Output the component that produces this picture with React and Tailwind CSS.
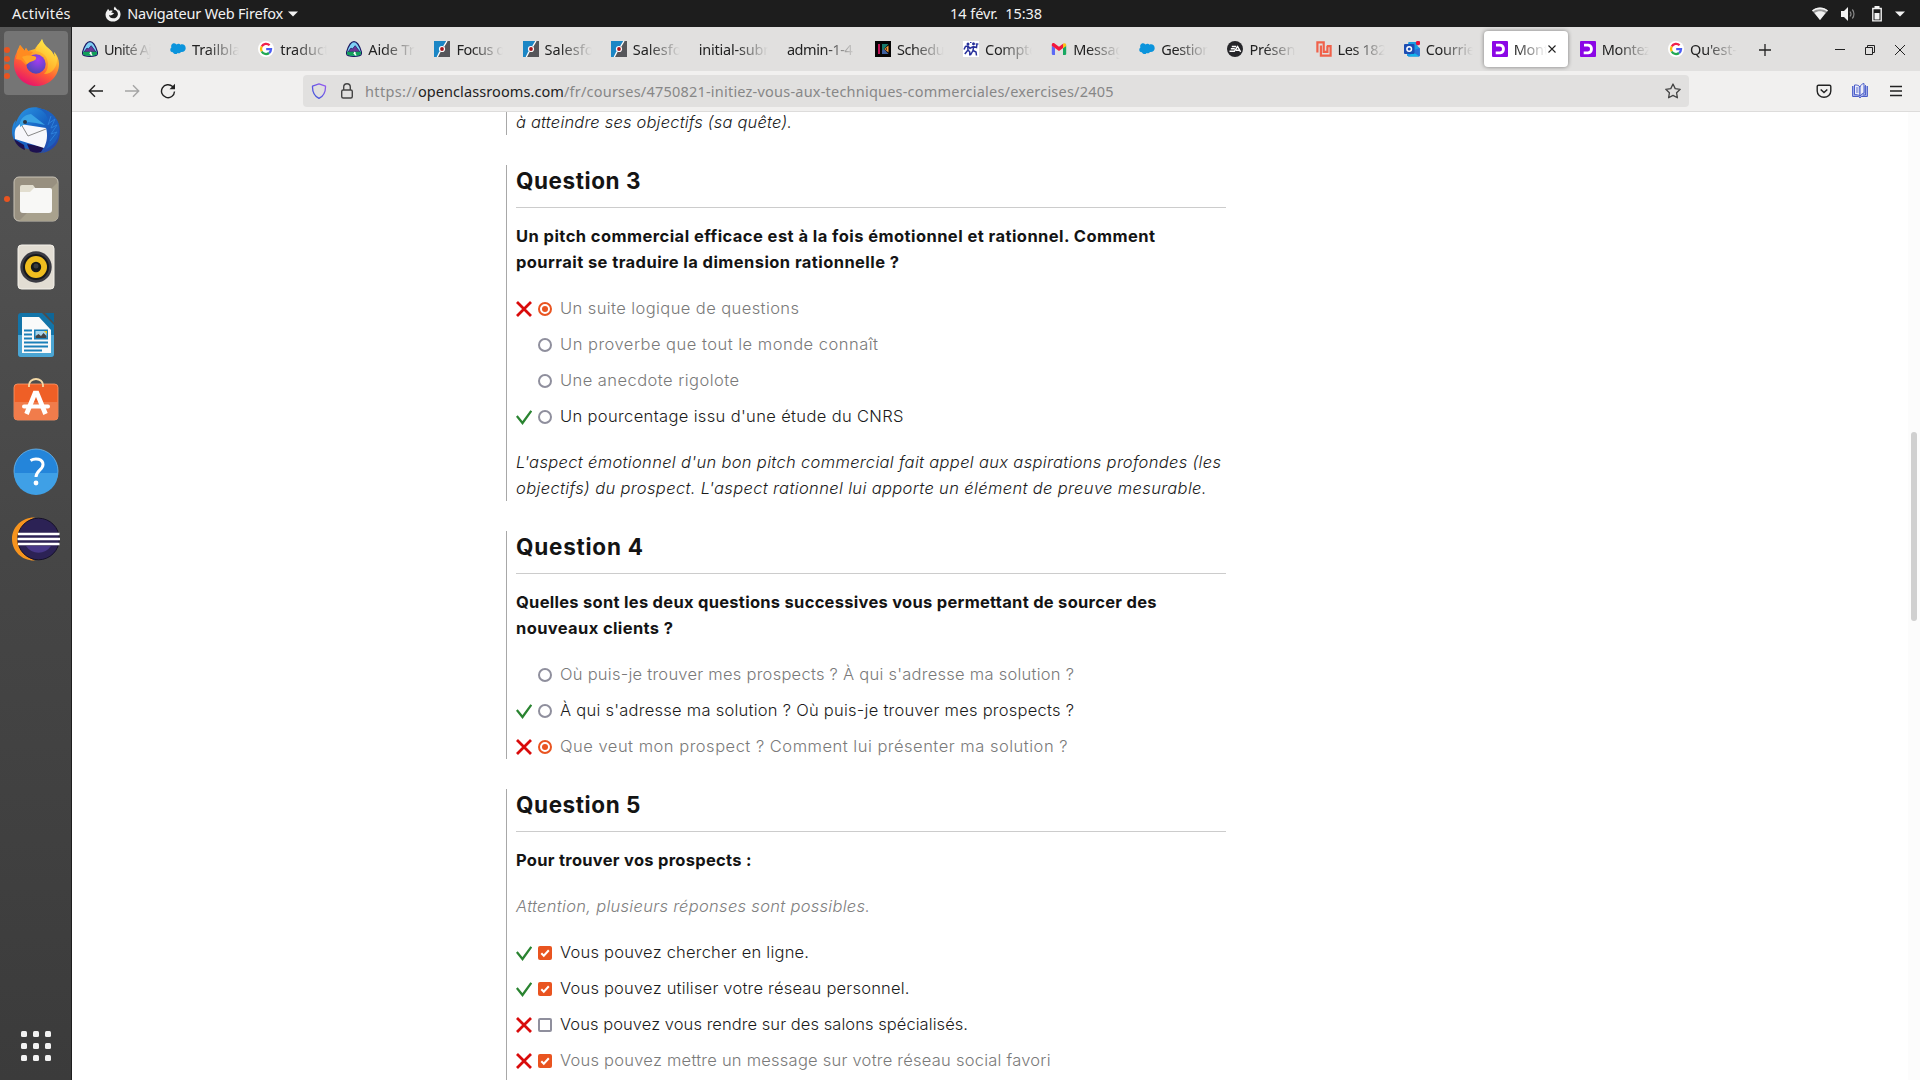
import { useLayoutEffect, useRef } from "react";

/* Text run whose letter spacing is adjusted so that it is exactly `w` pixels wide. */
function Fit({ w, className = "", children }) {
  const ref = useRef(null);
  useLayoutEffect(() => {
    const el = ref.current;
    const apply = () => {
      el.style.letterSpacing = "0px";
      const n = el.textContent.length;
      const natural = el.getBoundingClientRect().width;
      el.style.letterSpacing = `${(w - natural) / (n - 1)}px`;
    };
    apply();
    document.fonts?.ready.then(apply);
  }, [w, children]);
  return (
    <span ref={ref} className={`inline-block whitespace-pre ${className}`}>
      {children}
    </span>
  );
}

/* ---------- favicons ---------- */
const Svg = ({ children, s = 16, className = "", ...p }) => (
  <svg width={s} height={s} viewBox={`0 0 ${s} ${s}`} className={`shrink-0 ${className}`} {...p}>
    {children}
  </svg>
);
const Trailhead = () => (
  <Svg>
    <path d="M8 .6C11 .6 13.6 5 15.3 10.6c.5 2-.3 3.600-1.800 4.100-3.500.9-7.500.9-11 0C1 14.200.2 12.600.7 10.600 2.400 5 5 .6 8 .6Z" fill="#7fd0f5" stroke="#1d1a63" strokeWidth="1.200" />
    <path d="M2 11 5 7l1.300 1L9.200 4.700 14 11Z" fill="#6b3796" stroke="#1d1a63" strokeWidth=".7" />
    <path d="M1.100 10.800h13.800c.5 1.700-.2 3-1.500 3.400-3.500.8-7.300.8-10.800 0-1.300-.4-2-1.700-1.500-3.400Z" fill="#12a05a" />
    <path d="M7.500 10.800c2 .8-1.500 1.500.5 2.200l1 1.500h1.500c.3-1.500-1.500-1.500-.8-2.300.5-.6-.7-1.100-1.200-1.400Z" fill="#fff" />
  </Svg>
);
const Cloud = () => (
  <Svg>
    <path d="M6.600 3.500C7.200 2.800 8 2.600 8.700 2.700c.8.100 1.300.5 1.700 1 2.600-1.200 5.300.5 5.300 3.500 0 2.700-2.400 4.200-4.700 3.700-.8 1.300-2.300 1.500-3.400 1-1 1.800-4 1.600-4.700-.6C1.200 11.400 0 9.900.3 8.200c.1-.8.5-1.400 1.100-1.800C.5 4 2.400 2.200 4.300 2.300c1 .1 1.700.5 2.300 1.200Z" fill="#0b94dc" />
  </Svg>
);
const Google = () => (
  <Svg>
    <circle cx="8" cy="8" r="8" fill="#fff" />
    <g fill="none" strokeWidth="2.300">
      <path d="M11.600 4.300A5 5 0 0 0 3.700 5.500" stroke="#f0214b" />
      <path d="M3.700 5.500a5 5 0 0 0 0 5" stroke="#fbbc05" />
      <path d="M3.700 10.500a5 5 0 0 0 7.400 1.500" stroke="#21a852" />
      <path d="M11.100 12A5 5 0 0 0 13 8.200H8.200" stroke="#4a5cf2" />
    </g>
  </Svg>
);
const Focus = () => (
  <Svg>
    <path d="M0 0h16v16H0z" fill="#55565a" />
    <path d="M0 0h12.500L9 6 3.200 16H0z" fill="#1b86c5" />
    <path d="M13 0 9.800 5.400M6 10.600 3.300 16" stroke="#fff" strokeWidth="1.300" />
    <circle cx="8" cy="8" r="3.100" fill="#fff" />
    <circle cx="8" cy="8" r="1.900" fill="#a8161c" />
  </Svg>
);
const Kx = () => (
  <Svg>
    <path d="M0 0h16v16H0z" fill="#050505" />
    <path d="M3 3h2v10H3z" fill="#c01457" />
    <path d="M7 3h6.500L9 8v5H7z" fill="#16796a" />
    <path d="M7 9.500 9 8l4.500 5H7z" fill="#3d5f9d" />
    <path d="M13.500 4.500v7L9.300 8z" fill="#f09a35" />
    <path d="M12 6.700v2.600L10.500 8z" fill="#3a1f2c" />
  </Svg>
);
const Compt = () => (
  <Svg>
    <path d="M0 0h16v16H0z" fill="#fff" />
    <g fill="none" stroke="#27309b" strokeWidth="1.500">
      <path d="M4.700 5 5 9l-3.200 4M5 9l1.800 2v3.500M1 8.500l1.500-3L5 5l2.500 3M10.700 5 10 9.500 7.500 14M10 9.500l3 1.500.5 3.500M7.500 7l3-1.500 3 1L14 2.500" />
    </g>
    <circle cx="5" cy="3" r="1.500" fill="#27309b" />
    <circle cx="10.500" cy="2.700" r="1.500" fill="#27309b" />
    <path d="M12.500 3h3M7 1.500h1.500" stroke="#27309b" />
  </Svg>
);
const Gmail = () => (
  <Svg>
    <path d="M.8 4.500 4 7v7H2a1.200 1.200 0 0 1-1.200-1.200z" fill="#5b6af5" />
    <path d="M15.200 4.500 12 7v7h2a1.200 1.200 0 0 0 1.200-1.200z" fill="#17a861" />
    <path d="M.8 4.800V3.700C.8 2 2.500 1.600 3.600 2.400L8 5.800l4.400-3.400v4.300L8 10 .8 4.800Z" fill="#f3173c" />
    <path d="M12 2.700c1.300-1 3.200-.5 3.200 1.100v1.200L12 7.300z" fill="#fcc01a" />
  </Svg>
);
const Ea = () => (
  <Svg>
    <circle cx="8" cy="8" r="8" fill="#26262a" />
    <path d="M4.800 5.500h4.400M3.800 7.800h4M2.500 10.300h4.800l3.300-4.800 3 5.300M9 9.300h3.500" stroke="#fff" strokeWidth="1.400" fill="none" />
  </Svg>
);
const Les = () => (
  <Svg>
    <path d="M1.400 11.500V1.400h6.300v9.500h3.700V5M4.900 4.500v10.100h9.700V5.200h-3.800" stroke="#f0614a" strokeWidth="2.200" fill="none" />
  </Svg>
);
const Outlook = () => (
  <Svg>
    <path d="M4.500 1h9v4l2.300 2v8H3V8z" fill="#1b9de2" />
    <path d="M9 9.500 15.800 7v7.500a1 1 0 0 1-1 1H4z" fill="#2a6fd6" />
    <path d="M4 15.500 9 11l6.500 4.500z" fill="#14b4ea" />
    <rect x="0" y="3" width="10.500" height="10" rx="1" fill="#1b4db3" />
    <circle cx="5.200" cy="8" r="2.300" fill="none" stroke="#fff" strokeWidth="1.500" />
    <circle cx="14" cy="2" r="2.200" fill="#e5123c" />
  </Svg>
);
const Oc = () => (
  <Svg>
    <rect width="16" height="16" rx="1" fill="#8b07e6" />
    <path d="M4 4.200h4.200a3.900 3.900 0 0 1 0 7.700H3.700" fill="none" stroke="#fff" strokeWidth="2.800" />
  </Svg>
);

const TABS = [
  [Trailhead, "Unité Aj", 48],
  [Cloud, "Trailblaz", 55],
  [Google, "traduct", 49],
  [Trailhead, "Aide Tra", 54],
  [Focus, "Focus on", 57],
  [Focus, "Salesfor", 55],
  [Focus, "Salesfor", 55],
  [null, "initial-subm", 78],
  [null, "admin-1-4", 66],
  [Kx, "Schedul", 51],
  [Compt, "Compte", 52],
  [Gmail, "Messag", 51],
  [Cloud, "Gestion", 50],
  [Ea, "Présent", 51],
  [Les, "Les 182", 49],
  [Outlook, "Courrier", 55],
  [Oc, "Monte", 43, true],
  [Oc, "Montez", 49],
  [Google, "Qu'est-c", 54],
];

function Tab({ tab: [Icon, text, w, active] }) {
  return (
    <div className="w-[88.12px] shrink-0 px-[2px] py-1">
      <div className={`flex h-9 items-center rounded pl-2 ${active ? "bg-white shadow-[0_0_4px_rgba(0,0,0,0.45)]" : ""}`}>
        {Icon && <span className="mr-[6px]"><Icon /></span>}
        <div
          className={`overflow-hidden text-[14.5px] leading-5 ${active ? "w-[33px]" : Icon ? "w-[47px]" : "w-[69px]"} [mask-image:linear-gradient(to_left,transparent,black_32px)]`}
        >
          <Fit w={w}>{text}</Fit>
        </div>
        {active && (
          <Svg s={8} className="ml-[1px]">
            <path d="m.5.5 7 7m0-7-7 7" stroke="#222" strokeWidth="1.100" />
          </Svg>
        )}
      </div>
    </div>
  );
}

/* ---------- dock ---------- */
const DockSvg = ({ children }) => (
  <svg width="52" height="52" viewBox="0 0 52 52">{children}</svg>
);
const Firefox = () => (
  <DockSvg>
    <defs>
      <linearGradient id="ffa" x1=".8" y1="0" x2=".3" y2="1">
        <stop offset="0" stopColor="#fff04a" /><stop offset=".35" stopColor="#ffb02c" /><stop offset=".65" stopColor="#ff5a36" /><stop offset="1" stopColor="#e5106f" />
      </linearGradient>
      <linearGradient id="ffb" x1=".7" y1="0" x2=".3" y2="1">
        <stop offset="0" stopColor="#fff44f" /><stop offset="1" stopColor="#ff9a1f" />
      </linearGradient>
      <radialGradient id="ffc" cx=".6" cy=".3" r=".7">
        <stop offset="0" stopColor="#a43cf0" /><stop offset="1" stopColor="#4f46b8" />
      </radialGradient>
    </defs>
    <path d="M32 2c-1 3-5 6-7 10l-7 2-2-3c-1 1-1 2-1 3L10 8C9 11 7 13 6.500 16 4.500 19 4 24 4 27c0 12 10 22 22.500 22S49 39 49 27c0-5-2-9-5-12l1 5-3-5C39 11 33 9 32 2Z" fill="url(#ffa)" />
    <path d="M32 2c-1 3-6 7-6 12 7 1 12 6 12 13 0 5-2 8-4 10 9 0 13-8 13-14 0-3-1-6-3-8l1 5-3-5C38 10 34 9 32 2Z" fill="url(#ffb)" />
    <circle cx="26" cy="27" r="9.700" fill="url(#ffc)" />
    <path d="m10 8 5 6 1-3 2 3 5 1-3 3 6 2c0 3-4 4-7 5l-3 3-5-5-5-1c1-5 3-10 4-14Z" fill="#ff8b20" />
    <path d="M12 20c4-2 8-2 14 0 1 3-3 4-6 5l-3 2Z" fill="#ffa528" />
  </DockSvg>
);
const Thunderbird = () => (
  <DockSvg>
    <defs>
      <linearGradient id="tba" x1="0" y1="0" x2="1" y2="1">
        <stop offset="0" stopColor="#2d9be6" /><stop offset=".5" stopColor="#1763c4" /><stop offset="1" stopColor="#2a3fa0" />
      </linearGradient>
    </defs>
    <path d="M19 3c4-1 9-1 13 1 10 2 18 11 18 22s-6 20-18 22l3-3-4 3-3-1 3-2C16 46 3 40 2 28c0-6 1-10 4-13l-1 5c3-8 6-14 14-17Z" fill="url(#tba)" />
    <path d="M4 34c2 6 6 9 11 11l-1-5Zm13 5 3 7c4 2 7 2 11 1l3-5Z" fill="#1d1150" />
    <path d="m10 19 26 4c2 7 1 14-2 20L5 34c0-3-1-7 1-11Z" fill="#f7f7fb" />
    <path d="m11 19 7 12 18-7" fill="none" stroke="#888" strokeWidth="1" />
    <path d="M10 22c-1-8 4-12 11-13l14 11-9-2-8-1Z" fill="#3aa3e5" />
    <path d="M22 3c10-1 15 6 17 14s2 18-3 27c11-5 14-14 13-23C47 11 38 2 22 3Z" fill="#1c5fbe" />
    <circle cx="15" cy="17" r="2" fill="#2b3540" />
    <path d="m38 19 7-5-4 9 6-3-6 9 6-2-7 9m-2-16 3-9" stroke="#2c7fd9" strokeWidth="1" fill="none" />
  </DockSvg>
);
const Files = () => (
  <DockSvg>
    <rect x="4" y="4" width="44" height="44" rx="5" fill="#989080" stroke="#c9c3b6" strokeWidth="1" />
    <path d="M48 9v34a5 5 0 0 1-5 5H9Z" fill="#a8a18d" />
    <path d="M10 14a2 2 0 0 1 2-2h11l3 4v8H10z" fill="#e2decf" />
    <path d="M10 19h10l4-4h16a2 2 0 0 1 2 2v20a3 3 0 0 1-3 3H13a3 3 0 0 1-3-3z" fill="#f8f8f6" />
  </DockSvg>
);
const Rhythmbox = () => (
  <DockSvg>
    <rect x="8" y="4" width="36" height="44" rx="3.500" fill="#e2ddd3" stroke="#f4f1ea" />
    <circle cx="26" cy="26" r="15.700" fill="#3a3a42" />
    <circle cx="26" cy="26" r="13" fill="#17181c" />
    <circle cx="26" cy="26" r="11" fill="#f0bd1f" />
    <circle cx="26" cy="26" r="5.200" fill="#17181a" />
    <circle cx="26" cy="25" r="2.500" fill="#3a3b3e" />
  </DockSvg>
);
const Writer = () => (
  <DockSvg>
    <path d="M11 4h21l12 12v29a3 3 0 0 1-3 3H11a3 3 0 0 1-3-3V7a3 3 0 0 1 3-3Z" fill="#1374a8" />
    <path d="M8 26h36v19a3 3 0 0 1-3 3H11a3 3 0 0 1-3-3Z" fill="#4ba5d3" />
    <path d="M12 8h17l12 13v23H12z" fill="#fafafa" />
    <path d="M35 4h9v10z" fill="#0f6697" />
    <path d="M14 21.500h8m-8 4h8m-8 4h8m-8 4h24m-24 4h24m-24 4h18" stroke="#1a7fb8" strokeWidth="1.800" />
    <path d="M24 20.500h14v10H24z" fill="#1a7fb8" />
    <path d="M25.500 22h11v7h-11z" fill="#a8d4ea" />
    <path d="m25.500 29v-2l3-2 2.500 2 2.500-3 3 3v2z" fill="#444" />
    <path d="M34 22h3v3z" fill="#f2c71c" />
  </DockSvg>
);
const Software = () => (
  <DockSvg>
    <rect x="4" y="7" width="44" height="36" rx="3.500" fill="#ef5f26" stroke="#ff9a6b" strokeWidth=".8" />
    <path d="M4 25h44v14a4 4 0 0 1-4 4H8a4 4 0 0 1-4-4z" fill="#f17c4b" />
    <path d="M19 10V8a7 6 0 0 1 14 0v2" fill="none" stroke="#f4d9a6" strokeWidth="1.800" />
    <path d="m16.500 37 8.500-21h2l8.500 21" fill="none" stroke="#fff" strokeWidth="4.700" />
    <path d="M14 29.500h24" stroke="#fff" strokeWidth="4" strokeLinecap="round" />
  </DockSvg>
);
const Help = () => (
  <DockSvg>
    <circle cx="26" cy="26" r="22" fill="#2485da" stroke="#6cb8ee" strokeWidth=".8" />
    <path d="M4 28h44a22 22 0 0 1-44 0Z" fill="#3fa0e6" />
    <path d="M20.500 15.500c5-3 12.500-1.500 12.500 4 0 5.500-7 6-7 12.500" fill="none" stroke="#fff" strokeWidth="3" />
    <circle cx="26" cy="38" r="2.400" fill="#fff" />
  </DockSvg>
);
const Eclipse = () => (
  <DockSvg>
    <path d="M25 4.500C12 4 2 14 2 26s10 22 23 21.500C16 44 9 37 9 26S16 8 25 4.500Z" fill="#f7941e" />
    <circle cx="28.500" cy="26" r="20.800" fill="#2c2255" stroke="#161129" />
    <path d="M16 33h25a15 15 0 0 1-25 0Z" fill="#473788" />
    <path d="M8 21h41.500M7.500 26H50M8 31h41.500" stroke="#fff" strokeWidth="2.300" />
  </DockSvg>
);
const DOCK = [[Firefox, 4], [Thunderbird, 0], [Files, 1], [Rhythmbox, 0], [Writer, 0], [Software, 0], [Help, 0], [Eclipse, 0]];

function Dock() {
  return (
    <aside className="flex w-[72px] shrink-0 flex-col justify-between border-r border-[#1e1e1e] bg-gradient-to-b from-[#575757] via-[#464646] to-[#3b3b3b] pt-[2px]">
      <div className="flex flex-col">
        {DOCK.map(([Icon, dots], i) => (
          <div key={i} className="h-[68px] py-[2px] pl-1">
            <div className={`relative flex h-16 w-16 items-center justify-center rounded ${i === 0 ? "bg-[#757575]" : ""}`}>
              <div className="absolute left-0 flex h-full flex-col items-center justify-center gap-[2.700px]">
                {Array.from({ length: dots }, (_, k) => (
                  <i key={k} className="h-[6px] w-[6px] rounded-full bg-[#e95420]" />
                ))}
              </div>
              <Icon />
            </div>
          </div>
        ))}
      </div>
      <div className="mb-[19px] ml-[21px] grid w-[30px] grid-cols-3 gap-[6px]">
        {Array.from({ length: 9 }, (_, k) => (
          <i key={k} className="h-[6px] w-[6px] rounded-[1.500px] bg-[#f2f2f2]" />
        ))}
      </div>
    </aside>
  );
}

/* ---------- system bar ---------- */
function TopBar() {
  return (
    <header className="grid h-[27px] grid-cols-3 items-center bg-[#1d1d1d] text-[14.500px] leading-[27px] text-[#f2f2f2]">
      <div className="flex items-center pl-3">
        <Fit w={58.5}>Activités</Fit>
        <Svg className="ml-[34.5px]">
          <path d="M10 .6c-1 .8-1.500 2-.8 3.200A4.200 4.200 0 0 1 8 12.300C5.500 12.300 4 10.500 4 8.700c.5.6 1.200.8 2 .6 1.500-.2 2-1.300 3-1.600-.5-1-1.600-1-2.600-.8.1-1 .8-1.600 1.500-2C6.800 4.500 5.500 4.300 4.600 5L3 2.700C2.700 3.500 2.300 4.200 1.700 5 0 7.500.2 10.500 1.800 12.700 5 16.700 11.500 16.500 14.300 12.500c2.300-3.600 1.200-7.300-1-9.300l.2 1.800C12.500 3 10.500 2.500 10 .6Z" fill="#f2f2f2" />
        </Svg>
        <Fit w={156} className="ml-[6px]">Navigateur Web Firefox</Fit>
        <Svg s={10} className="ml-[5px]"><path d="M0 2.500h10L5 7.500z" fill="#f2f2f2" /></Svg>
      </div>
      <div className="-mt-px flex pl-[310px]">
        <Fit w={92}>14 févr.  15:38</Fit>
      </div>
      <div className="flex items-center justify-end pr-[15px]">
        <Svg><path d="M0 4.500c4.500-4 11.500-4 16 0L8 14z" fill="#999" /><path d="M0 4.500c4.500-4 11.500-4 16 0l-1 1c-4-3-10-3-14 0zM2.500 7c3-2.500 8-2.500 11 0L8 14z" fill="#f2f2f2" /></Svg>
        <Svg className="ml-[12px]"><path d="M1 5h3l4-4v14l-4-4H1z" fill="#f2f2f2" /><path d="M10 5.500c1.200 1.500 1.200 3.500 0 5M12.300 3.500c2.200 2.500 2.200 6.500 0 9" stroke="#888" fill="none" strokeWidth="1.200" /></Svg>
        <Svg className="ml-[13px]"><path d="M3.800 2.500h8.400v12.400H3.800z" fill="none" stroke="#f2f2f2" strokeWidth="1.400" /><path d="M5.500 0h5v2h-5zM5.500 7h5v6.500h-5z" fill="#f2f2f2" /></Svg>
        <Svg s={10} className="ml-[10px]"><path d="M0 2.500h10L5 7.500z" fill="#f2f2f2" /></Svg>
      </div>
    </header>
  );
}

/* ---------- browser chrome ---------- */
function TabStrip() {
  return (
    <div className="flex h-11 items-start bg-[#e1e0df] text-[#222]">
      {TABS.map((t, i) => <Tab key={i} tab={t} />)}
      <div className="flex h-[45px] flex-1 items-center pl-[13px]">
        <Svg s={12}><path d="M6 0v12M0 6h12" stroke="#222" strokeWidth="1.300" /></Svg>
        <Svg s={10} className="ml-[64px]"><path d="M0 4.500h10" stroke="#222" strokeWidth="1" /></Svg>
        <Svg s={10} className="ml-[20px]"><path d="M.5 2.500h7v7h-7zM2.500 2.500v-2h7v7h-2" fill="none" stroke="#222" /></Svg>
        <Svg s={10} className="ml-[20px]"><path d="m0 0 10 10M10 0 0 10" stroke="#222" strokeWidth="1" /></Svg>
      </div>
    </div>
  );
}

function NavBar() {
  return (
    <div className="flex h-[41px] items-start border-b border-[#dddcdb] bg-[#f1f0ef] pt-1 text-[#333]">
      <div className="flex h-8 w-[231px] items-center pl-4">
        <Svg><path d="M15 8H1.500M7 2.300 1.300 8 7 13.700" fill="none" stroke="#222" strokeWidth="1.400" /></Svg>
        <Svg className="ml-5"><path d="M1 8h13.500M9 2.300 14.700 8 9 13.700" fill="none" stroke="#a5a5a5" strokeWidth="1.400" /></Svg>
        <Svg className="ml-5"><path d="M14.500 8.500A6.500 6.500 0 1 1 12.600 3.600L14 5" fill="none" stroke="#222" strokeWidth="1.400" /><path d="M15 .8V6.300H9.500z" fill="#222" /></Svg>
      </div>
      <div className="flex h-8 w-[1386px] items-center rounded bg-[#e1e0df] pl-2 pr-2">
        <Svg>
          <defs><linearGradient id="sh" x1="1" y1="0" x2="0" y2="1"><stop offset="0" stopColor="#9a5cf0" /><stop offset="1" stopColor="#3553d8" /></linearGradient></defs>
          <path d="M8 .8 14.500 3.200C14.700 9 12.500 13 8 15.400 3.500 13 1.300 9 1.500 3.200z" fill="none" stroke="url(#sh)" strokeWidth="1.300" strokeLinejoin="round" />
        </Svg>
        <Svg className="ml-3"><rect x="2.700" y="7" width="10.600" height="8" rx="1.500" fill="none" stroke="#444" strokeWidth="1.400" /><path d="M4.700 7V4a3.300 3.300 0 0 1 6.600 0v3" fill="none" stroke="#444" strokeWidth="1.400" /></Svg>
        <div className="ml-[10px] flex text-[14.500px] leading-5 text-[#878787]">
          <Fit w={52.5}>https://</Fit>
          <Fit w={146} className="text-[#222]">openclassrooms.com</Fit>
          <Fit w={549.5}>/fr/courses/4750821-initiez-vous-aux-techniques-commerciales/exercises/2405</Fit>
        </div>
        <Svg className="ml-auto"><path d="m8 1 2.200 4.600 5 .7-3.600 3.500.8 5L8 12.400l-4.400 2.400.8-5L.8 6.300l5-.7z" fill="none" stroke="#444" strokeWidth="1.300" strokeLinejoin="round" /></Svg>
      </div>
      <div className="flex h-8 flex-1 items-center justify-end pr-4">
        <Svg><path d="M2.500 2.200h11a1.300 1.300 0 0 1 1.300 1.300V8a6.800 6.300 0 0 1-13.600 0V3.500a1.300 1.300 0 0 1 1.300-1.300Z" fill="none" stroke="#222" strokeWidth="1.400" /><path d="m4.700 6.500 3.300 3 3.300-3" fill="none" stroke="#222" strokeWidth="1.500" /></Svg>
        <Svg className="ml-5">
          <path d="M.6 3v10.500h6.200L8 15l1.200-1.500h6.200V3" fill="#a9b4ea" stroke="#4a5cc8" />
          <path d="M2.500 2C4.800 1.700 7 2.500 8 4v9c-1.500-1.200-3.500-1.500-5.500-1.300z" fill="#eceefa" stroke="#4a5cc8" />
          <path d="M8 4c.7-2 2-3.200 4-3.500v9.500C10.500 10.500 9 11.500 8 13z" fill="#eceefa" stroke="#4a5cc8" />
          <path d="M13.500 2v10H11M4 5h2.500M4 7h2.500M4 9h2.500" fill="none" stroke="#4a5cc8" strokeWidth=".9" />
        </Svg>
        <Svg className="ml-5" s={16}><path d="M2 3.500h12M2 8h12M2 12.500h12" stroke="#222" strokeWidth="1.400" /></Svg>
      </div>
    </div>
  );
}

/* ---------- quiz ---------- */
const QUESTIONS = [
  {
    n: "Question 3",
    lines: [["Un pitch commercial efficace est à la fois émotionnel et rationnel. Comment", 639], ["pourrait se traduire la dimension rationnelle ?", 383]],
    options: [
      ["x", true, "Un suite logique de questions", 239, false],
      ["", false, "Un proverbe que tout le monde connaît", 318, false],
      ["", false, "Une anecdote rigolote", 179, false],
      ["v", false, "Un pourcentage issu d'une étude du CNRS", 343.5, true],
    ],
    note: [["L'aspect émotionnel d'un bon pitch commercial fait appel aux aspirations profondes (les", 705], ["objectifs) du prospect. L'aspect rationnel lui apporte un élément de preuve mesurable.", 690.5]],
  },
  {
    n: "Question 4",
    w: 127,
    lines: [["Quelles sont les deux questions successives vous permettant de sourcer des", 640.5], ["nouveaux clients ?", 157]],
    options: [
      ["", false, "Où puis-je trouver mes prospects ? À qui s'adresse ma solution ?", 514, false],
      ["v", false, "À qui s'adresse ma solution ? Où puis-je trouver mes prospects ?", 514, true],
      ["x", true, "Que veut mon prospect ? Comment lui présenter ma solution ?", 507.5, false],
    ],
  },
  {
    n: "Question 5",
    multi: true,
    last: true,
    lines: [["Pour trouver vos prospects :", 235.5]],
    hint: ["Attention, plusieurs réponses sont possibles.", 354],
    options: [
      ["v", true, "Vous pouvez chercher en ligne.", 249, true],
      ["v", true, "Vous pouvez utiliser votre réseau personnel.", 349.5, true],
      ["x", false, "Vous pouvez vous rendre sur des salons spécialisés.", 408, true],
      ["x", true, "Vous pouvez mettre un message sur votre réseau social favori", 490.5, false],
    ],
  },
];

const Mark = ({ kind }) => (
  <Svg className="mt-[1px]">
    {kind === "x" && <path d="m1 1 14 14M15 1 1 15" stroke="#d90b0b" strokeWidth="2.800" />}
    {kind === "v" && <path d="m.8 7 5.700 7L15.300 1.800" fill="none" stroke="#2a8431" strokeWidth="2.300" />}
  </Svg>
);

const Control = ({ multi, on }) => (
  <Svg s={14} className="ml-[6px] mt-[1px]">
    {!multi && <circle cx="7" cy="7" r="6" fill="#fff" stroke={on ? "#e95420" : "#8f8f9d"} strokeWidth="2" />}
    {!multi && on && <circle cx="7" cy="7" r="3" fill="#e95420" />}
    {multi && !on && <rect x="1" y="1" width="12" height="12" rx="1" fill="#fff" stroke="#8f8f9d" strokeWidth="2" />}
    {multi && on && <rect width="14" height="14" rx="2" fill="#e95420" />}
    {multi && on && <path d="m3.300 7.200 2.500 2.500 5-5.400" fill="none" stroke="#fff" strokeWidth="2" />}
  </Svg>
);

function Question({ q }) {
  return (
    <section className={`w-[720px] shrink-0 border-l border-[#a8a8a8] pl-[9px] text-[#1b1b1b] ${q.last ? "pb-[30px]" : "mb-[30px]"}`}>
      <h3 className="h-[43px] border-b border-[#cccccc] text-[22.500px] font-bold leading-[31px] text-[#141414]">
        <Fit w={q.w || 124.5}>{q.n}</Fit>
      </h3>
      <div className="mt-[15px] flex flex-col gap-5">
        <div className="flex flex-col font-bold text-[#141414]">
          {q.lines.map(([t, w]) => <Fit key={t} w={w} className="self-start">{t}</Fit>)}
        </div>
        {q.hint && <Fit w={q.hint[1]} className="self-start italic text-[#808080]">{q.hint[0]}</Fit>}
        <ul className="flex flex-col gap-[10px]">
          {q.options.map(([mark, on, t, w, strong]) => (
            <li key={t} className="flex h-[26px] items-center">
              <Mark kind={mark} />
              <Control multi={q.multi} on={on} />
              <Fit w={w} className={`ml-2 ${strong ? "text-[#1b1b1b]" : "text-[#7a7a7a]"}`}>{t}</Fit>
            </li>
          ))}
        </ul>
        {q.note && (
          <div className="flex flex-col italic">
            {q.note.map(([t, w]) => <Fit key={t} w={w} className="self-start">{t}</Fit>)}
          </div>
        )}
      </div>
    </section>
  );
}

export default function App() {
  return (
    <div className="flex h-[1080px] w-[1920px] flex-col overflow-hidden bg-white font-['Noto_Sans','Open_Sans',sans-serif]">
      <TopBar />
      <div className="flex min-h-0 flex-1">
        <Dock />
        <div className="flex min-w-0 flex-1 flex-col">
          <TabStrip />
          <NavBar />
          <div className="flex min-h-0 flex-1 justify-between overflow-hidden">
            <main className="flex flex-col overflow-hidden pl-[434px] font-['Inter',sans-serif] text-[16.500px] font-light leading-[26px]">
              <div className="mb-[30px] flex h-[23px] shrink-0 items-end border-l border-[#a8a8a8] pl-[9px] italic text-[#1b1b1b]">
                <Fit w={276}>à atteindre ses objectifs (sa quête).</Fit>
              </div>
              {QUESTIONS.map((q) => <Question key={q.n} q={q} />)}
            </main>
            <div className="w-3 bg-[#fcfcfc] pt-[320px]">
              <div className="mx-auto h-[189px] w-[6px] rounded-full bg-[#d0d0d0]" />
            </div>
          </div>
        </div>
      </div>
    </div>
  );
}
